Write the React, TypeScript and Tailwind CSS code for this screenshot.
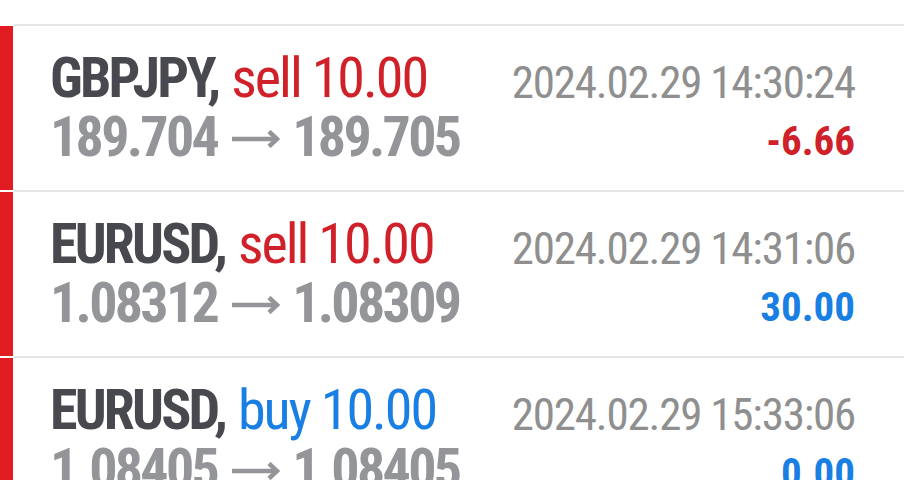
import React from 'react';

type Deal = {
  symbol: string;
  side: 'buy' | 'sell';
  volume: string;
  open: string;
  close: string;
  time: string;
  profit: string;
};

const deals: Deal[] = [
  { symbol: 'GBPJPY', side: 'sell', volume: '10.00', open: '189.704', close: '189.705', time: '2024.02.29 14:30:24', profit: '-6.66' },
  { symbol: 'EURUSD', side: 'sell', volume: '10.00', open: '1.08312', close: '1.08309', time: '2024.02.29 14:31:06', profit: '30.00' },
  { symbol: 'EURUSD', side: 'buy', volume: '10.00', open: '1.08405', close: '1.08405', time: '2024.02.29 15:33:06', profit: '0.00' },
];

function Separator() {
  return (
    <div className="flex h-[2px]">
      <div className="w-[14px] bg-white" />
      <div className="flex-1 bg-[#e6e6e6]" />
    </div>
  );
}

function Arrow() {
  return (
    <svg
      width="48"
      height="18"
      viewBox="0 0 48 18"
      className="ml-[15px] mr-[12px] inline-block align-[8px]"
      fill="none"
      stroke="#939598"
      strokeWidth="4.5"
    >
      <line x1="0" y1="9" x2="45" y2="9" />
      <polyline points="37,1.5 45,9 37,16.5" strokeLinejoin="miter" />
    </svg>
  );
}

function DealRow({ deal }: { deal: Deal }) {
  const sideColor = deal.side === 'sell' ? 'text-[#d0212a]' : 'text-[#1a7fe3]';
  const profitColor = deal.profit.startsWith('-') ? 'text-[#d0212a]' : 'text-[#1a7fe3]';
  return (
    <div className="flex h-[164px]">
      <div className="w-[13px] bg-[#e11b22]" />
      <div className="flex flex-1 justify-between whitespace-nowrap pl-[37px] pr-[49px]">
        <div className="flex flex-col pt-[23px] text-[56px] leading-[59px]">
          <div>
            <span className="font-bold tracking-[-2.8px] text-[#48484f]">{deal.symbol},</span>{' '}
            <span className={`tracking-[-2px] ${sideColor}`}>
              {deal.side} {deal.volume}
            </span>
          </div>
          <div className="font-bold tracking-[-2.7px] text-[#939598]">
            {deal.open}
            <Arrow />
            {deal.close}
          </div>
        </div>
        <div className="flex flex-col items-end pt-[31px]">
          <div className="text-[45px] leading-[52px] tracking-[-1.2px] text-[#8f8f8f]">{deal.time}</div>
          <div className={`mt-[8px] text-[41px] font-bold leading-[48px] ${profitColor}`}>{deal.profit}</div>
        </div>
      </div>
    </div>
  );
}

export default function App() {
  return (
    <div
      className="h-[480px] w-[904px] overflow-hidden bg-white"
      style={{ fontFamily: '"Roboto Condensed", Roboto, sans-serif' }}
    >
      <div className="h-[24px]" />
      {deals.map((deal, i) => (
        <div key={i}>
          <Separator />
          <DealRow deal={deal} />
        </div>
      ))}
    </div>
  );
}
